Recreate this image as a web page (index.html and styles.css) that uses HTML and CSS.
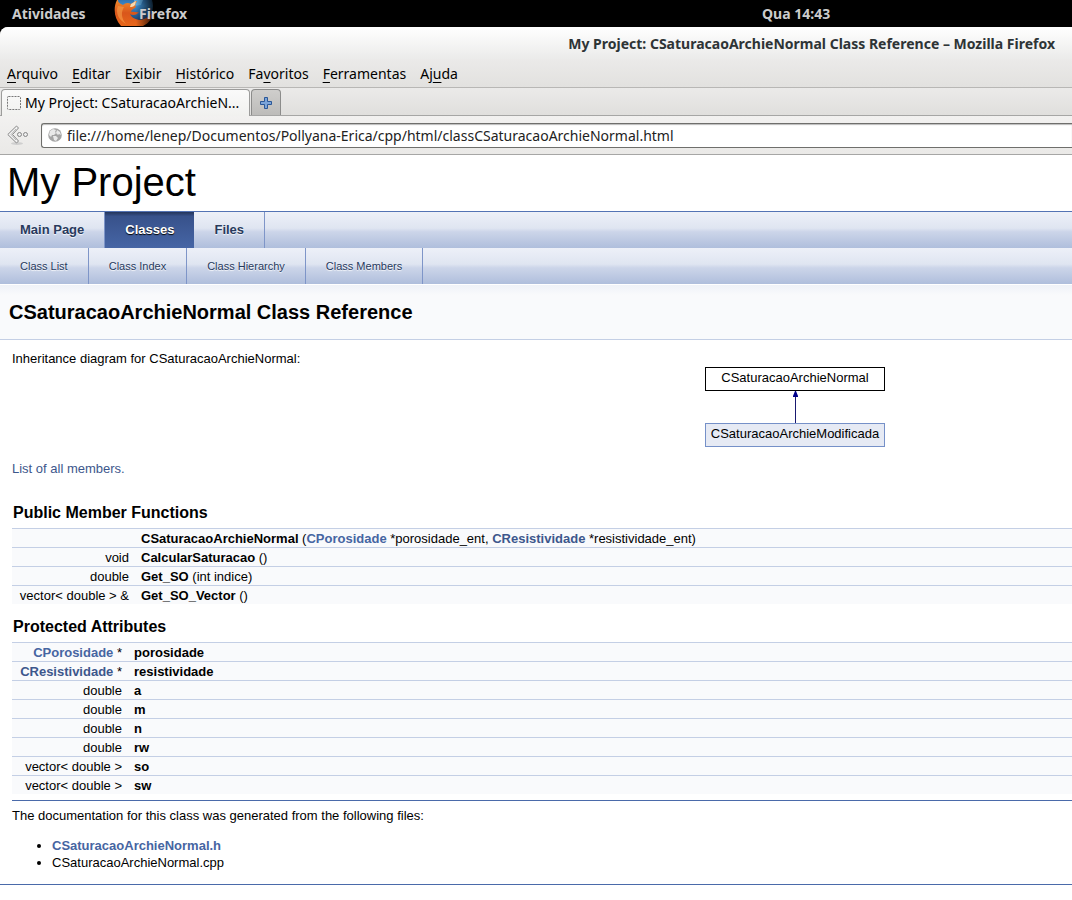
FILE: index.html
```html
<!DOCTYPE html>
<html lang="pt-BR">
<head>
<meta charset="utf-8">
<title>My Project: CSaturacaoArchieNormal Class Reference</title>
<link rel="stylesheet" href="styles.css">
</head>
<body>
<header class="panel">
  <button class="panel-item">Atividades</button>
  <button class="panel-item panel-app">
    <svg class="fox" width="44" height="27" viewBox="0 0 44 27" aria-hidden="true">
      <defs>
        <linearGradient id="globe" x1="0" y1="0" x2="0" y2="1"><stop offset="0" stop-color="#18457e"/><stop offset="0.5" stop-color="#3c8bcb"/><stop offset="1" stop-color="#173460"/></linearGradient>
        <linearGradient id="fur" x1="0" y1="0" x2="0" y2="1"><stop offset="0" stop-color="#ef8a2b"/><stop offset="0.5" stop-color="#d9561b"/><stop offset="1" stop-color="#e8671a"/></linearGradient>
        <linearGradient id="fade" x1="0" y1="0" x2="1" y2="0"><stop offset="0.5" stop-color="#000" stop-opacity="0"/><stop offset="1" stop-color="#000"/></linearGradient>
      </defs>
      <circle cx="21" cy="6" r="18" fill="url(#globe)"/>
      <path d="M20 0h9l-2 5-7 1z" fill="#5ba7dc"/>
      <path d="M3 0C-1 8 0 18 7 26h22c6-3 10-8 11-15-5 6-10 9-15 9-5-1-8-3-9-6 3 2 7 1 9-2-3 1-5-1-8 0 0-2 2-3 4-4 1-1 1-2 0-3l2-4c-3 0-4 2-6 3-3-2-6-1-8 1C5 3 4 2 4 0z" fill="url(#fur)"/>
      <path d="M4 6c-3 7 1 14 8 18C7 18 7 12 10 7z" fill="#f6a04a" opacity="0.6"/>
      <path d="M17 4l5-3-1 4c-2 2-3 2-5 2z" fill="#f8d9ae"/>
      <rect width="44" height="27" fill="url(#fade)"/>
    </svg>
    <span class="app-name">Firefox</span>
  </button>
  <time class="clock">Qua 14:43</time>
</header>
<section class="chrome">
  <div class="titlebar">My Project: CSaturacaoArchieNormal Class Reference – Mozilla Firefox</div>
  <nav class="menubar">
    <button><u>A</u>rquivo</button>
    <button><u>E</u>ditar</button>
    <button>E<u>x</u>ibir</button>
    <button><u>H</u>istórico</button>
    <button>Fa<u>v</u>oritos</button>
    <button><u>F</u>erramentas</button>
    <button>Aj<u>u</u>da</button>
  </nav>
  <div class="tabstrip">
    <button class="tab">
      <svg width="14" height="14" viewBox="0 0 14 14" aria-hidden="true"><rect x="0.5" y="0.5" width="13" height="13" rx="1" fill="none" stroke="#777" stroke-dasharray="2 1"/></svg>
      <span>My Project: CSaturacaoArchieN...</span>
    </button>
    <button class="newtab" aria-label="Nova aba">
      <svg width="12" height="12" viewBox="0 0 12 12" aria-hidden="true"><path d="M4.5.5h3v4h4v3h-4v4h-3v-4h-4v-3h4z" fill="#7ba4d9" stroke="#2b5797"/></svg>
    </button>
  </div>
  <div class="navbar">
    <button class="back" aria-label="Voltar">
      <svg width="22" height="20" viewBox="0 0 22 20" aria-hidden="true"><ellipse cx="10" cy="18.500" rx="6" ry="1.500" fill="#cfcfcf"/><path d="M9.500 1l2 2-6 6.500 6 6.500-2 2L.8 9.500z" fill="#f3f3f3" stroke="#858585"/><path d="M9 4L4 9.500 9 15" fill="none" stroke="#b5b5b5"/><circle cx="12.500" cy="9.500" r="2" fill="#eee" stroke="#858585"/><circle cx="18.500" cy="9.500" r="2" fill="#eee" stroke="#858585"/></svg>
    </button>
    <label class="urlbar">
      <svg width="14" height="14" viewBox="0 0 14 14" aria-hidden="true"><circle cx="7" cy="7" r="6.800" fill="#a5a5a5"/><path d="M2 3l3-2 3 1-1 2 1 1-2 2-2 0-1 2-2-2zM9 2l3 2 1 3-2-1-1 1-2-2zM5 8l3 0 2 2-2 3-2-1z" fill="#e9e9e9"/></svg>
      <input aria-label="Endereço" value="file:///home/lenep/Documentos/Pollyana-Erica/cpp/html/classCSaturacaoArchieNormal.html">
    </label>
  </div>
</section>
<main class="page">
  <div class="project">My Project</div>
  <nav class="tabs">
    <a href="#">Main Page</a><a class="current" href="#">Classes</a><a href="#">Files</a>
  </nav>
  <nav class="tabs subtabs">
    <a href="#">Class List</a><a href="#">Class Index</a><a href="#">Class Hierarchy</a><a href="#">Class Members</a>
  </nav>
  <div class="header"><h1>CSaturacaoArchieNormal Class Reference</h1></div>
  <div class="contents">
    <p>Inheritance diagram for CSaturacaoArchieNormal:</p>
    <div class="diagram">
      <a class="node base" href="#">CSaturacaoArchieNormal</a>
      <svg width="7" height="32" viewBox="0 0 7 32" aria-hidden="true"><path d="M3 3h1v29H3z" fill="#191970"/><path d="M3 0h1l2 5v1H1V5z" fill="#00008b"/></svg>
      <a class="node derived" href="#">CSaturacaoArchieModificada</a>
    </div>
    <p class="all"><a href="#">List of all members.</a></p>
    <h2>Public Member Functions</h2>
    <table class="functions">
      <tr><td></td><td><b>CSaturacaoArchieNormal</b> (<a href="#">CPorosidade</a> *porosidade_ent, <a class="visited" href="#">CResistividade</a> *resistividade_ent)</td></tr>
      <tr><td>void</td><td><b>CalcularSaturacao</b> ()</td></tr>
      <tr><td>double</td><td><b>Get_SO</b> (int indice)</td></tr>
      <tr><td>vector&lt; double &gt; &amp;</td><td><b>Get_SO_Vector</b> ()</td></tr>
    </table>
    <h2>Protected Attributes</h2>
    <table class="attributes">
      <tr><td><a href="#">CPorosidade</a> *</td><td><b>porosidade</b></td></tr>
      <tr><td><a class="visited" href="#">CResistividade</a> *</td><td><b>resistividade</b></td></tr>
      <tr><td>double</td><td><b>a</b></td></tr>
      <tr><td>double</td><td><b>m</b></td></tr>
      <tr><td>double</td><td><b>n</b></td></tr>
      <tr><td>double</td><td><b>rw</b></td></tr>
      <tr><td>vector&lt; double &gt;</td><td><b>so</b></td></tr>
      <tr><td>vector&lt; double &gt;</td><td><b>sw</b></td></tr>
    </table>
    <hr>
    <p>The documentation for this class was generated from the following files:</p>
    <ul>
      <li><a href="#">CSaturacaoArchieNormal.h</a></li>
      <li>CSaturacaoArchieNormal.cpp</li>
    </ul>
  </div>
  <hr>
</main>
</body>
</html>
```
FILE: styles.css
```css
* { box-sizing: border-box; }
body { margin: 0; background: #000; color: #000; overflow: hidden; }
button { border: 0; padding: 0; background: none; font: inherit; color: inherit; }
p, h1, h2, ul { margin: 0; }

.panel { display: flex; align-items: center; height: 27px; padding-left: 12px; background: #000; color: #ccc; font: bold 14px/27px "Noto Sans", sans-serif; }
.panel-item { width: 102px; text-align: left; white-space: nowrap; }
.panel-app { display: grid; width: 648px; height: 27px; }
.fox, .app-name { grid-area: 1 / 1; }
.app-name { padding-left: 25px; }

.chrome { border-radius: 8px 0 0; overflow: hidden; background: #e9e8e6; font: 14px/18px "Noto Sans", sans-serif; }
.titlebar { height: 32px; padding: 8px 17px 0 0; background: linear-gradient(#fff, #ebebea); color: #2e3436; font-weight: bold; text-align: right; white-space: nowrap; }
.menubar { display: flex; gap: 14px; height: 29px; padding: 6px 7px 0; align-items: flex-start; border-bottom: 1px solid #b8b7b5; background: linear-gradient(#ebeae9, #e2e1df); }
.menubar u { text-underline-offset: 3px; }
.tabstrip { display: flex; gap: 1px; height: 28px; padding: 1px 1px 0; border-bottom: 1px solid #a6a6a5; background: linear-gradient(#ebeae9, #e0dfdd); }
.tab { display: flex; align-items: center; gap: 4px; width: 249px; height: 27px; padding: 0 5px; border: 1px solid #9c9c9b; border-bottom: 0; border-radius: 4px 4px 0 0; background: linear-gradient(#fafafa, #f1f1ef); white-space: nowrap; }
.newtab { display: grid; place-items: center; width: 30px; height: 26px; border: 1px solid #8c8c8b; border-bottom: 0; border-radius: 4px 4px 0 0; background: linear-gradient(#cfcecc, #bdbcba); }
.navbar { display: flex; align-items: center; gap: 12px; height: 39px; padding-left: 7px; border-bottom: 1px solid #a6a6a5; background: linear-gradient(#f2f1f0, #eae9e7); }
.back { display: flex; width: 22px; }
.urlbar { display: flex; flex: 1; align-items: center; gap: 5px; height: 25px; padding-left: 6px; border: 1px solid #6f6f6c; border-right: 0; border-radius: 3px 0 0 3px; background: #fff; box-shadow: inset 0 1px 1px #bbb; }
.urlbar input { flex: 1; min-width: 0; padding: 1px 0 0; border: 0; outline: 0; background: none; font: inherit; color: #222; }

.page { min-height: calc(100vh - 155px); background: #fff; font: 13px/17px "Liberation Sans", Arial, sans-serif; }
.project { height: 57px; padding-left: 7px; border-bottom: 1px solid #5373b4; font-size: 40px; line-height: 55px; }
a { color: #4665a2; font-weight: bold; text-decoration: none; }
a.visited { color: #3d578c; }
.tabs { display: flex; height: 36px; background: linear-gradient(#edf0f8, #dfe5f1 45%, #ccd5e9 55%, #afbedc); line-height: 36px; }
.tabs a { padding: 0 20px; border-right: 1px solid #7e95c8; color: #283a5d; text-shadow: 0 1px 1px rgba(255, 255, 255, .9); white-space: nowrap; }
.tabs .current { border-right: 0; background: linear-gradient(#24355a, #38528b 12%, #4665a5); color: #fff; text-shadow: 0 1px 1px #000; }
.subtabs { font-size: 11px; }
.subtabs a { font-weight: normal; }
.header { height: 56px; padding: 16px 9px 0; border-top: 1px solid #fff; border-bottom: 1px solid #c4cfe5; background: linear-gradient(#eff2f8, #f9fafc 10px); }
h1 { font-size: 20px; line-height: 22px; }
.contents { padding: 10px 0 0 12px; }
.diagram { display: flex; flex-direction: column; align-items: center; width: 180px; margin: 0 0 13px 693px; }
.node { width: 180px; height: 24px; border: 1px solid #000; color: #000; font-weight: normal; line-height: 20px; text-align: center; white-space: nowrap; }
.derived { border-color: #7590c8; background: #e6eaf4; }
.all a { color: #3d578c; font-weight: normal; }
h2 { padding: 24px 1px 0; font-size: 16px; line-height: 24px; }
table + h2 { padding-top: 11px; }
h2 + table { margin-top: 3px; }
table { width: 100%; border-collapse: separate; border-spacing: 0; background: #f9fafc; }
td { height: 19px; padding: 1px 0 0; border-top: 1px solid #c4cfe5; line-height: 17px; white-space: nowrap; }
td:first-child { padding-right: 12px; text-align: right; }
.functions td:first-child { width: 129px; }
.attributes td:first-child { width: 122px; }
hr { height: 1px; margin: 6px 0; border: 0; background: #4a6aaa; }
ul { padding: 13px 0 7px 40px; }
```
